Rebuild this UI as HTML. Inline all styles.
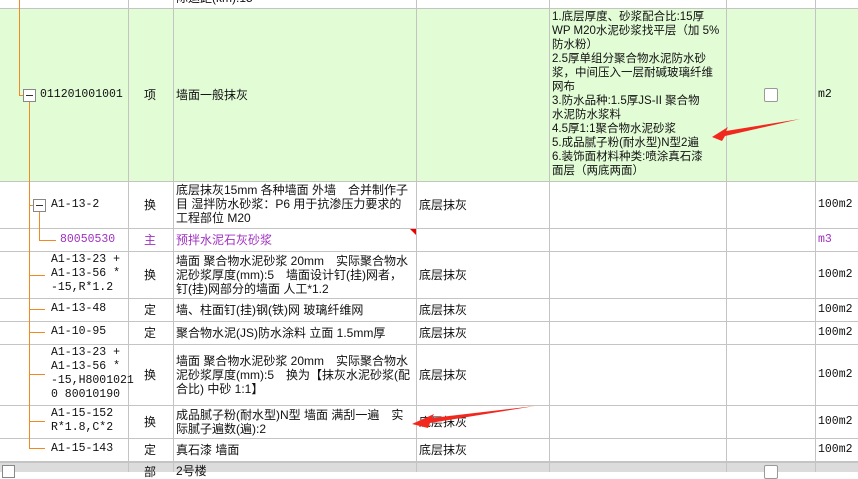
<!DOCTYPE html><html><head><meta charset="utf-8"><style>
body{margin:0;width:858px;height:472px;overflow:hidden;background:#fff;font-family:"Liberation Sans","Noto Sans CJK SC",sans-serif;font-size:12px;color:#111;position:relative}
div{position:absolute;box-sizing:border-box}
.h{height:1px;left:0;width:858px;background:#c4c4c4}
.v{width:1px;background:#c4c4c4}
.t{line-height:14px;white-space:nowrap}
.m{font-family:"Liberation Mono","Noto Sans CJK SC",monospace;font-size:11.5px}
.o{background:#f08a20}
.box{width:13px;height:13px;border:1px solid #888;background:#fff}
.box.mn:after{content:"";position:absolute;left:2px;top:5px;width:7px;height:1px;background:#333}
.p{color:#a030c0}
</style></head><body>
<div style="left:0;top:9px;width:858px;height:172px;background:#e2fcd6"></div>
<div style="left:0;top:462px;width:858px;height:10px;background:#dcdcdc"></div>
<div class="h" style="top:8px"></div><div class="h" style="top:181px"></div><div class="h" style="top:228px"></div><div class="h" style="top:251px"></div><div class="h" style="top:298px"></div><div class="h" style="top:321px"></div><div class="h" style="top:344px"></div><div class="h" style="top:405px"></div><div class="h" style="top:438px"></div><div class="h" style="top:461px;height:2px"></div>
<div class="v" style="left:128px;top:0;height:472px"></div><div class="v" style="left:173px;top:0;height:472px"></div><div class="v" style="left:416px;top:0;height:472px"></div><div class="v" style="left:549px;top:0;height:472px"></div><div class="v" style="left:726px;top:0;height:472px"></div><div class="v" style="left:815px;top:0;height:472px"></div>
<div class="t m" style="left:51px;top:-9px">A1-10-40 + 4</div>
<div class="t" style="left:176px;top:-9px">际运距(km):15</div>
<!-- tree -->
<div class="o" style="left:19px;top:0;width:1px;height:95px"></div>
<div class="o" style="left:19px;top:95px;width:5px;height:1px"></div>
<div class="box mn" style="left:23px;top:89px"></div>
<div class="o" style="left:29px;top:102px;width:1px;height:347px"></div>
<div class="o" style="left:29px;top:205px;width:4px;height:1px"></div>
<div class="box mn" style="left:33px;top:199px"></div>
<div class="o" style="left:39px;top:212px;width:1px;height:28px"></div>
<div class="o" style="left:39px;top:240px;width:17px;height:1px"></div>
<div class="o" style="left:29px;top:275px;width:16px;height:1px"></div>
<div class="o" style="left:29px;top:309px;width:16px;height:1px"></div>
<div class="o" style="left:29px;top:332px;width:16px;height:1px"></div>
<div class="o" style="left:29px;top:374px;width:16px;height:1px"></div>
<div class="o" style="left:29px;top:421px;width:16px;height:1px"></div>
<div class="o" style="left:29px;top:448px;width:16px;height:1px"></div>
<div class="box" style="left:2px;top:465px"></div>
<!-- codes -->
<div class="t m" style="left:40px;top:88px">011201001001</div>
<div class="t m" style="left:51px;top:198px">A1-13-2</div>
<div class="t m p" style="left:60px;top:233px">80050530</div>
<div class="t m" style="left:51px;top:253px">A1-13-23 +<br>A1-13-56 *<br>-15,R*1.2</div>
<div class="t m" style="left:51px;top:302px">A1-13-48</div>
<div class="t m" style="left:51px;top:325px">A1-10-95</div>
<div class="t m" style="left:51px;top:346px">A1-13-23 +<br>A1-13-56 *<br>-15,H8001021<br>0 80010190</div>
<div class="t m" style="left:51px;top:407px">A1-15-152<br>R*1.8,C*2</div>
<div class="t m" style="left:51px;top:442px">A1-15-143</div>
<!-- types -->
<div class="t" style="left:144px;top:88px">项</div>
<div class="t" style="left:144px;top:198px">换</div>
<div class="t p" style="left:144px;top:233px">主</div>
<div class="t" style="left:144px;top:268px">换</div>
<div class="t" style="left:144px;top:303px">定</div>
<div class="t" style="left:144px;top:326px">定</div>
<div class="t" style="left:144px;top:368px">换</div>
<div class="t" style="left:144px;top:415px">换</div>
<div class="t" style="left:144px;top:443px">定</div>
<div class="t" style="left:144px;top:465px">部</div>
<!-- names -->
<div class="t" style="left:176px;top:88px">墙面一般抹灰</div>
<div class="t" style="left:176px;top:183px">底层抹灰15mm 各种墙面 外墙　合并制作子<br>目 湿拌防水砂浆：P6 用于抗渗压力要求的<br>工程部位 M20</div>
<div style="left:410px;top:229px;width:0;height:0;border-top:6px solid #e00;border-left:6px solid transparent"></div>
<div class="t p" style="left:176px;top:233px">预拌水泥石灰砂浆</div>
<div class="t" style="left:176px;top:254px">墙面 聚合物水泥砂浆 20mm　实际聚合物水<br>泥砂浆厚度(mm):5　墙面设计钉(挂)网者，<br>钉(挂)网部分的墙面 人工*1.2</div>
<div class="t" style="left:176px;top:303px">墙、柱面钉(挂)钢(铁)网 玻璃纤维网</div>
<div class="t" style="left:176px;top:326px">聚合物水泥(JS)防水涂料 立面 1.5mm厚</div>
<div class="t" style="left:176px;top:354px">墙面 聚合物水泥砂浆 20mm　实际聚合物水<br>泥砂浆厚度(mm):5　换为【抹灰水泥砂浆(配<br>合比) 中砂 1:1】</div>
<div class="t" style="left:176px;top:408px">成品腻子粉(耐水型)N型 墙面 满刮一遍　实<br>际腻子遍数(遍):2</div>
<div class="t" style="left:176px;top:443px">真石漆 墙面</div>
<div class="t" style="left:176px;top:464px">2号楼</div>
<!-- col4 -->
<div class="t" style="left:419px;top:198px">底层抹灰</div>
<div class="t" style="left:419px;top:268px">底层抹灰</div>
<div class="t" style="left:419px;top:303px">底层抹灰</div>
<div class="t" style="left:419px;top:326px">底层抹灰</div>
<div class="t" style="left:419px;top:368px">底层抹灰</div>
<div class="t" style="left:419px;top:415px">底层抹灰</div>
<div class="t" style="left:419px;top:443px">底层抹灰</div>
<!-- features -->
<div class="t" style="left:552px;top:10px;font-size:11.5px">1.底层厚度、砂浆配合比:15厚<br>WP M20水泥砂浆找平层（加 5%<br>防水粉）<br>2.5厚单组分聚合物水泥防水砂<br>浆，中间压入一层耐碱玻璃纤维<br>网布<br>3.防水品种:1.5厚JS-II 聚合物<br>水泥防水浆料<br>4.5厚1:1聚合物水泥砂浆<br>5.成品腻子粉(耐水型)N型2遍<br>6.装饰面材料种类:喷涂真石漆<br>面层（两底两面）</div>
<div style="left:764px;top:88px;width:14px;height:14px;border:1px solid #999;border-radius:2px;background:#fff"></div>
<div style="left:764px;top:465px;width:14px;height:14px;border:1px solid #999;border-radius:2px;background:#fff"></div>
<!-- units -->
<div class="t m" style="left:818px;top:88px">m2</div>
<div class="t m" style="left:818px;top:198px">100m2</div>
<div class="t m p" style="left:818px;top:233px">m3</div>
<div class="t m" style="left:818px;top:268px">100m2</div>
<div class="t m" style="left:818px;top:303px">100m2</div>
<div class="t m" style="left:818px;top:326px">100m2</div>
<div class="t m" style="left:818px;top:368px">100m2</div>
<div class="t m" style="left:818px;top:415px">100m2</div>
<div class="t m" style="left:818px;top:443px">100m2</div>
<svg style="position:absolute;left:0;top:0" width="858" height="472">
<polygon points="800,119 726,131 728,127 712,137 722,141 725,136" fill="#f2281e"/>
<polygon points="535,406 432,418 434,414 412,424 428,428 430,423" fill="#f2281e"/>
</svg>
</body></html>
